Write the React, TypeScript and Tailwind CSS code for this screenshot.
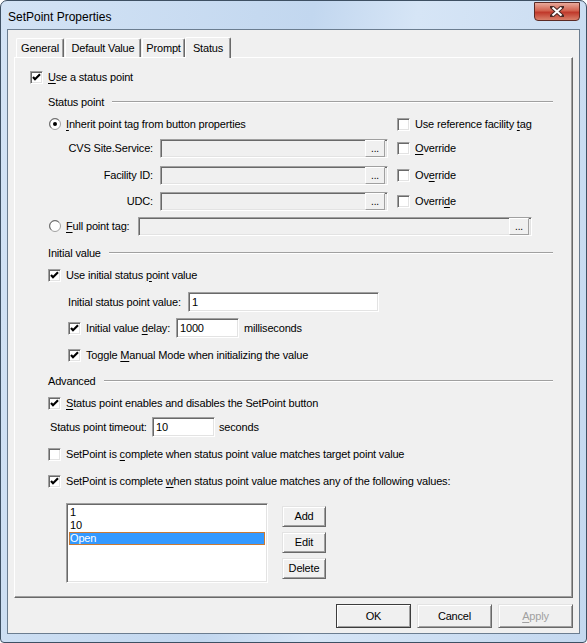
import React from "react";

const sunken =
  "border border-t-[#a0a0a0] border-l-[#a0a0a0] border-r-white border-b-white shadow-[inset_1px_1px_0_#696969,inset_-1px_-1px_0_#e3e3e3]";
const raised =
  "border border-t-[#e3e3e3] border-l-[#e3e3e3] border-r-[#696969] border-b-[#696969] shadow-[inset_1px_1px_0_#fff,inset_-1px_-1px_0_#a0a0a0] bg-[#f0f0f0]";

const Check = ({ on }: { on?: boolean }) => (
  <div className={`w-[13px] h-[13px] bg-white shrink-0 ${sunken} flex items-center justify-center`}>
    {on && (
      <svg width="9" height="9" viewBox="0 0 9 9">
        <path d="M1 4 L3 6.2 L8 1.2" stroke="#000" strokeWidth="2.2" fill="none" />
      </svg>
    )}
  </div>
);

const Radio = ({ on }: { on?: boolean }) => (
  <svg width="12" height="12" viewBox="0 0 12 12" className="shrink-0">
    <circle cx="6" cy="6" r="5.5" fill="#fff" stroke="#a0a0a0" />
    <path d="M2.2 9.8 A5 5 0 0 1 9.8 2.2" stroke="#696969" fill="none" />
    {on && <circle cx="6" cy="6" r="2" fill="#000" />}
  </svg>
);

const U = ({ children }: { children: React.ReactNode }) => <span className="underline underline-offset-[2px]">{children}</span>;

const Field = ({ w, h = 19, value, disabled, dots }: { w: number; h?: number; value?: string; disabled?: boolean; dots?: boolean }) => (
  <div
    className={`${sunken} ${disabled ? "bg-[#f0f0f0]" : "bg-white"} flex items-center justify-between pl-[3px] pr-[2px] shrink-0`}
    style={{ width: w, height: h }}
  >
    <span>{value}</span>
    {dots && (
      <div className="w-[20px] h-[17px] bg-[#f0f0f0] border border-[#a0a0a0] border-t-white border-l-white flex items-end justify-center pb-[2px] text-[10px] leading-none">
        ...
      </div>
    )}
  </div>
);

const Group = ({ title }: { title: string }) => (
  <div className="flex items-center h-5 pl-[33px] pr-[19px] gap-2">
    <span>{title}</span>
    <div className="flex-1 border-t border-t-[#a0a0a0] border-b border-b-white" />
  </div>
);

const Btn = ({ children, w, h, def, disabled }: { children: React.ReactNode; w: number; h: number; def?: boolean; disabled?: boolean }) => (
  <div
    className={`${def ? "outline outline-1 outline-[#3c3c3c] -outline-offset-1" : ""} ${raised} flex items-center justify-center ${disabled ? "text-[#a0a0a0]" : ""}`}
    style={{ width: w, height: h }}
  >
    {children}
  </div>
);

export default function App() {
  return (
    <div className="w-[587px] h-[643px] relative bg-[linear-gradient(100deg,#d3e3f5_0%,#c2d7ef_45%,#d6e5f6_60%,#c4d8ef_100%)] border border-[#3e5063] rounded-t-[7px] rounded-b-[4px] text-black font-['Liberation_Sans',Arial,sans-serif] text-[11px] tracking-[-0.17px] flex flex-col overflow-hidden">
      {/* title bar */}
      <div className="h-[28px] flex items-start justify-between pl-[7px] pr-[6px] shrink-0">
        <span className="text-[12px] tracking-normal mt-[7px]">SetPoint Properties</span>
        <div className="w-[46px] h-[19px] mt-[1px] rounded-b-[4px] border border-[#5b2a25] bg-[linear-gradient(#e9a99a,#d2624f_45%,#c0392b_55%,#d9806a)] flex items-center justify-center">
          <svg width="14" height="11" viewBox="0 0 14 11">
            <path d="M2 1 L12 10 M12 1 L2 10" stroke="#4a2a26" strokeWidth="4" strokeLinecap="square" />
            <path d="M2.5 1.5 L11.5 9.5 M11.5 1.5 L2.5 9.5" stroke="#fff" strokeWidth="2" />
          </svg>
        </div>
      </div>

      {/* client */}
      <div className="mx-[6px] h-[605px] bg-[#f0f0f0] border border-[#6b7d90] flex flex-col px-[6px] pt-[7px]">
        {/* tabs */}
        <div className="flex items-end pl-[2px] h-[20px] relative z-10">
          {[
            ["General", 48],
            ["Default Value", 76],
            ["Prompt", 43],
          ].map(([t, w], i) => (
            <div
              key={t as string}
              className={`h-[19px] border-t border-l border-white border-r border-r-[#696969] shadow-[inset_-1px_0_0_#a0a0a0] rounded-t-[2px] flex items-center justify-center ${i > 0 ? "ml-[1px]" : ""}`}
              style={{ width: w as number }}
            >
              {t}
            </div>
          ))}
          <div className="w-[46px] h-[21px] -mb-px bg-[#f0f0f0] border-t border-l border-white border-r border-r-[#696969] shadow-[inset_-1px_0_0_#a0a0a0] rounded-t-[2px] flex items-start pt-[2px] justify-center">
            Status
          </div>
        </div>

        {/* panel */}
        <div className="w-[559px] h-[541px] border border-t-white border-l-white border-r-[#696969] border-b-[#696969] shadow-[inset_-1px_-1px_0_#a0a0a0] flex flex-col">
          <div className="flex items-center h-5 mt-[9px] pl-[15px] gap-[5px]">
            <Check on />
            <span><U>U</U>se a status point</span>
          </div>

          <div className="mt-[5px]"><Group title="Status point" /></div>

          <div className="flex items-center h-5 mt-[2px] pl-[34px]">
            <div className="w-[348px] flex items-center gap-[5px]">
              <Radio on />
              <span><U>I</U>nherit point tag from button properties</span>
            </div>
            <div className="flex items-center gap-[5px]">
              <Check />
              <span>Use reference facility <U>t</U>ag</span>
            </div>
          </div>

          {["CVS Site.Service:", "Facility ID:", "UDC:"].map((label, i) => (
            <div key={label} className={`flex items-center h-5 ${i === 0 ? "mt-[4px]" : i === 1 ? "mt-[7px]" : "mt-[6px]"}`}>
              <div className="w-[138px] text-right">{label}</div>
              <div className="ml-[7px]">
                <Field w={228} disabled dots />
              </div>
              <div className="ml-[9px] flex items-center gap-[5px]">
                <Check />
                {i === 0 ? (
                  <span><U>O</U>verride</span>
                ) : i === 1 ? (
                  <span>Ov<U>e</U>rride</span>
                ) : (
                  <span>Overri<U>d</U>e</span>
                )}
              </div>
            </div>
          ))}

          <div className="flex items-center h-5 mt-[5px] pl-[34px]">
            <div className="flex items-center gap-[5px] w-[89px]">
              <Radio />
              <span><U>F</U>ull point tag:</span>
            </div>
            <Field w={394} disabled dots />
          </div>

          <div className="mt-[7px]"><Group title="Initial value" /></div>

          <div className="flex items-center h-5 mt-[2px] pl-[33px] gap-[5px]">
            <Check on />
            <span>Use initial status <U>p</U>oint value</span>
          </div>

          <div className="flex items-center h-5 mt-[7px] pl-[53px]">
            <span className="w-[120px]">Initial status point value:</span>
            <Field w={191} h={20} value="1" />
          </div>

          <div className="flex items-center h-5 mt-[6px] pl-[53px]">
            <div className="flex items-center gap-[5px] w-[108px]">
              <Check on />
              <span>Initial value <U>d</U>elay:</span>
            </div>
            <Field w={63} h={20} value="1000" />
            <span className="ml-[5px]">milliseconds</span>
          </div>

          <div className="flex items-center h-5 mt-[7px] pl-[53px] gap-[5px]">
            <Check on />
            <span>Toggle <U>M</U>anual Mode when initializing the value</span>
          </div>

          <div className="mt-[6px]"><Group title="Advanced" /></div>

          <div className="flex items-center h-5 mt-[2px] pl-[33px] gap-[5px]">
            <Check on />
            <span><U>S</U>tatus point enables and disables the SetPoint button</span>
          </div>

          <div className="flex items-center h-5 mt-[4px] pl-[35px]">
            <span className="w-[102px]">Status point timeout:</span>
            <Field w={63} h={20} value="10" />
            <span className="ml-[4px]">seconds</span>
          </div>

          <div className="flex items-center h-5 mt-[7px] pl-[33px] gap-[5px]">
            <Check />
            <span>SetPoint is <U>c</U>omplete when status point value matches target point value</span>
          </div>

          <div className="flex items-center h-5 mt-[7px] pl-[33px] gap-[5px]">
            <Check on />
            <span>SetPoint is complete <U>w</U>hen status point value matches any of the following values:</span>
          </div>

          <div className="flex items-start mt-[12px] pl-[51px] gap-[14px]">
            <div className={`w-[202px] h-[80px] bg-white ${sunken} p-[2px] flex flex-col leading-[13px]`}>
              <div className="h-[13px] pl-[1px]">1</div>
              <div className="h-[13px] pl-[1px]">10</div>
              <div className="h-[13px] bg-[#3399ff] text-white border border-[#c97a35] flex items-center">Open</div>
            </div>
            <div className="flex flex-col gap-[5px] mt-[3px]">
              <Btn w={44} h={21}>Add</Btn>
              <Btn w={44} h={21}>Edit</Btn>
              <Btn w={44} h={21}>Delete</Btn>
            </div>
          </div>
        </div>

        {/* bottom buttons */}
        <div className="flex justify-end gap-[6px] mt-[6px]">
          <Btn w={75} h={24} def>OK</Btn>
          <Btn w={75} h={24}>Cancel</Btn>
          <Btn w={75} h={24} disabled><U>A</U>pply</Btn>
        </div>
      </div>
    </div>
  );
}
